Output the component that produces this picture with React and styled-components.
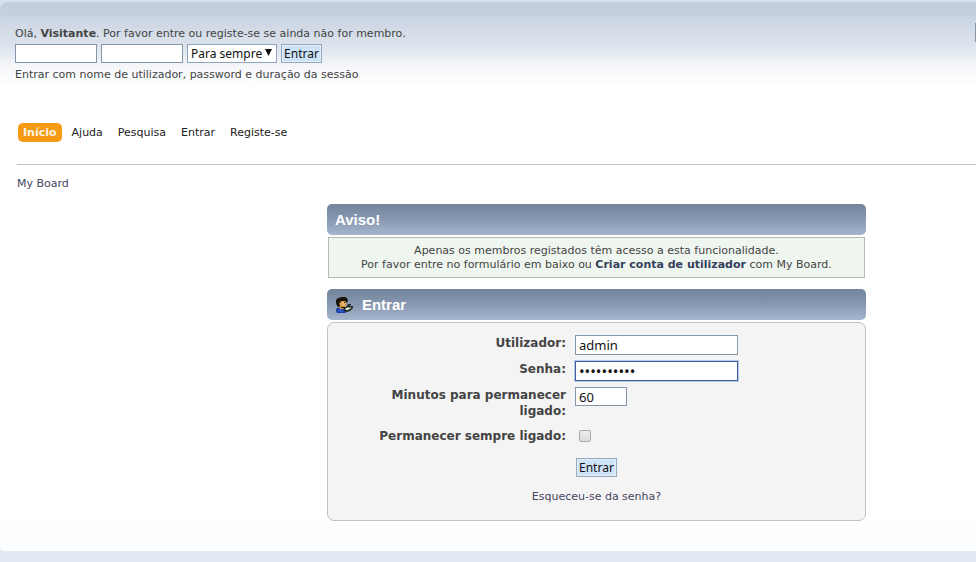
import React from "react";
import styled, { createGlobalStyle } from "styled-components";

const GlobalStyle = createGlobalStyle`
  * { box-sizing: border-box; }
  body {
    margin: 0;
    padding-top: 2px;
    background: #e3eaf4 linear-gradient(#d5e1ef, #e3eaf4 100px) no-repeat;
    color: #444;
    font: 11px/14px "DejaVu Sans", Verdana, sans-serif;
  }
`;

const Page = styled.div`
  overflow: hidden;
  border-top-left-radius: 8px;
  border-bottom-left-radius: 4px;
  background:
    linear-gradient(to bottom, #c2cddc, #c5d0df 13px, #cbd5e2 15px, #dde4ed 45px, #f4f6f9 64px, #fff 85px, transparent 85px),
    linear-gradient(to top, #fcfdff 24px, #fff 30px);
`;

const Header = styled.header`
  display: grid;
  grid-template-columns: 1fr 1px;
  padding: 25px 0 0 15px;
`;

const Greeting = styled.p`
  margin: 0 0 3px;
`;

const QuickForm = styled.form`
  display: flex;
  gap: 4px;
  margin-bottom: 5px;
`;

const Field = styled.input`
  width: ${(p) => p.$width}px;
  height: ${(p) => p.$height || 19}px;
  padding: 0 3px;
  border: 1px solid ${(p) => (p.$active ? "#3a5f9b" : "#8496a8")};
  box-shadow: ${(p) => (p.$active ? "0 0 0 1px #b4c8ea" : "none")};
  outline: none;
  background: #fff;
  color: #111;
  font: 13px/16px "Noto Sans", Tahoma, sans-serif;

  &[type="password"] {
    font-size: 15px;
  }
`;

const SearchField = styled(Field)`
  margin-top: -4px;
`;

const DurationSelect = styled.div`
  position: relative;
  width: 90px;
  height: 19px;

  select {
    appearance: none;
    width: 100%;
    height: 100%;
    padding: 0 3px;
    border: 1px solid #8fa5bb;
    border-radius: 0;
    background: #fff;
    color: #111;
    font: 12px/16px "Noto Sans", Tahoma, sans-serif;
  }

  svg {
    position: absolute;
    top: 5px;
    right: 5px;
    pointer-events: none;
  }
`;

const SubmitButton = styled.button`
  width: 41px;
  height: 19px;
  padding: 0;
  border: 1px solid #94a9be;
  background: #cde3f8;
  box-shadow: inset 0 0 0 1px #e2effb;
  color: #111;
  font: 12px/16px "Noto Sans", Tahoma, sans-serif;
`;

const Menu = styled.nav`
  display: flex;
  gap: 5px;
  margin: 41px 0 0 18px;
`;

const MenuLink = styled.a`
  padding: 2px 5px;
  border-radius: 5px;
  background: ${(p) => (p.$active ? "#f59a13" : "transparent")};
  color: ${(p) => (p.$active ? "#fdf5e2" : "#222")};
  font-weight: ${(p) => (p.$active ? "bold" : "normal")};
  line-height: 15px;
  text-decoration: none;
`;

const Breadcrumb = styled.div`
  margin: 22px 0 0 17px;
  padding-top: 12px;
  border-top: 1px solid #c0c0c0;
`;

const TextLink = styled.a`
  color: ${(p) => (p.$strong ? "#34405c" : "#46465e")};
  font-weight: ${(p) => (p.$strong ? "bold" : "normal")};
  text-decoration: none;
`;

const Main = styled.main`
  max-width: 539px;
  margin: 13px 20px 30px 33.5%;
`;

const TitleBar = styled.h3`
  display: flex;
  align-items: center;
  gap: 9px;
  height: 31px;
  margin: 0;
  padding: 0 8px;
  border-radius: 5px;
  background: linear-gradient(#72859b, #8798b0 50%, #a5b6cf);
  color: #fff;
  font: bold 15px/20px "Liberation Sans", Arial, sans-serif;
`;

const Notice = styled.p`
  margin: 2px 1px 11px;
  padding: 6px 10px 5px;
  border: 1px solid #b4bbb5;
  background: #eff6ef;
  text-align: center;
`;

const LoginPanel = styled.form`
  margin-top: 2px;
  padding: 12px 20px 16px;
  border: 1px solid #c0c0c0;
  border-radius: 7px;
  background: #f4f4f4;
  text-align: center;
`;

const Fields = styled.div`
  display: grid;
  grid-template-columns: 218px 1fr;
  column-gap: 9px;
  row-gap: 6px;
  justify-items: start;
  font-size: 12px;
  line-height: 16px;
`;

const Label = styled.label`
  justify-self: end;
  font-weight: bold;
  text-align: right;
`;

const Checkbox = styled.input`
  appearance: none;
  width: 12px;
  height: 12px;
  margin: 5px 4px 0;
  border: 1px solid #aaa;
  border-radius: 2px;
  background: linear-gradient(#ececec, #dcdcdc);
`;

const CheckLabel = styled(Label)`
  margin-top: 3px;
`;

const Actions = styled.div`
  margin: 14px 0 13px;
`;

function LoginIcon() {
  return (
    <svg width="18" height="18" viewBox="0 0 18 18" aria-hidden="true">
      <path d="M1 13l3-2h6l2 5-2 1H2l-1-2z" fill="#1d3f9e" />
      <path d="M4 5h7v5l-2 3H5L3 9z" fill="#d79a4b" />
      <path d="M1 4l2-2 4-1h4l2 3-1 3-2-2H6L5 7H4l1 3-1 1-2-1-1-3z" fill="#17120c" />
      <path d="M7 6h3v3H7z" fill="#efbd70" />
      <path d="M9 6h1v1H9zM6 11h4v1H6z" fill="#17120c" />
      <path d="M8 13l4-3 1-2h3v1l-2 1h4v2l-3 3-3 1-3-1z" fill="#222b28" />
      <path d="M10 13l3-2 1 1 2-1v1l-3 2h-2z" fill="#d9e9ce" />
      <path d="M3 13h4l2 3H4z" fill="#2857c7" />
    </svg>
  );
}

export default function App() {
  return (
    <>
      <GlobalStyle />
      <Page>
        <Header>
          <div>
            <Greeting>
              Olá, <b>Visitante</b>. Por favor entre ou registe-se se ainda não for membro.
            </Greeting>
            <QuickForm>
              <Field $width={82} type="text" aria-label="Utilizador" />
              <Field $width={82} type="password" aria-label="Senha" />
              <DurationSelect>
                <select aria-label="Duração da sessão">
                  <option>Para sempre</option>
                </select>
                <svg width="7" height="7" viewBox="0 0 7 7" aria-hidden="true">
                  <path d="M0 0h7L3.500 7z" fill="#111" />
                </svg>
              </DurationSelect>
              <SubmitButton type="button">Entrar</SubmitButton>
            </QuickForm>
            <div>Entrar com nome de utilizador, password e duração da sessão</div>
          </div>
          <SearchField $width={180} type="search" aria-label="Pesquisa" />
        </Header>
        <Menu>
          <MenuLink href="#" $active>Início</MenuLink>
          <MenuLink href="#">Ajuda</MenuLink>
          <MenuLink href="#">Pesquisa</MenuLink>
          <MenuLink href="#">Entrar</MenuLink>
          <MenuLink href="#">Registe-se</MenuLink>
        </Menu>
        <Breadcrumb>
          <TextLink href="#">My Board</TextLink>
        </Breadcrumb>
        <Main>
          <TitleBar>Aviso!</TitleBar>
          <Notice>
            Apenas os membros registados têm acesso a esta funcionalidade.
            <br />
            Por favor entre no formulário em baixo ou{" "}
            <TextLink href="#" $strong>Criar conta de utilizador</TextLink> com My Board.
          </Notice>
          <TitleBar>
            <LoginIcon />
            Entrar
          </TitleBar>
          <LoginPanel>
            <Fields>
              <Label htmlFor="user">Utilizador:</Label>
              <Field id="user" $width={163} $height={20} type="text" defaultValue="admin" />
              <Label htmlFor="pass">Senha:</Label>
              <Field id="pass" $width={163} $height={20} $active type="password" defaultValue="adminadmin" />
              <Label htmlFor="minutes">Minutos para permanecer ligado:</Label>
              <Field id="minutes" $width={52} type="text" defaultValue="60" />
              <CheckLabel htmlFor="always">Permanecer sempre ligado:</CheckLabel>
              <Checkbox id="always" type="checkbox" />
            </Fields>
            <Actions>
              <SubmitButton type="button">Entrar</SubmitButton>
            </Actions>
            <TextLink href="#">Esqueceu-se da senha?</TextLink>
          </LoginPanel>
        </Main>
      </Page>
    </>
  );
}
